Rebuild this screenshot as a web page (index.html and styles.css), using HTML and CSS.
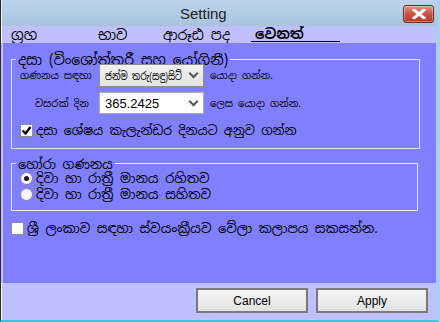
FILE: index.html
```html
<!DOCTYPE html>
<html lang="si">

<head>
	<meta charset='utf-8'>
	<title>Setting</title>
	<link rel="stylesheet" href="styles.css">
</head>

<body>
	<div id="window">
		<div class="titlebar">
			<span class="title">Setting</span>
			<button class="close">
				<svg width="14" height="10" viewBox="0 0 14 10">
					<path d="M2 1 L12 9 M12 1 L2 9" stroke="#ffffff" stroke-width="3" stroke-linecap="square" />
				</svg>
			</button>
		</div>
		<div class="tabs">
			<div class="tab">ග්‍රහ</div>
			<div class="tab">භාව</div>
			<div class="tab">ආරූඪ පද</div>
			<div class="tab active">වෙනත්</div>
		</div>
		<div id="panel">
			<div class="group g-dasa">
				<div class="caption">දසා (විංශෝත්තරී සහ යෝගිනී)</div>
				<div class="row r-first">
					<span class="label">ගණනය සඳහා</span>
					<div class="combo c-grey"><span class="sel">ජන්ම තරු(සඳු)සිට්</span><i class="arrow"></i></div>
					<span class="after">යොදා ගන්න.</span>
				</div>
				<div class="row r-second">
					<span class="label l-indent">වසරක් දින</span>
					<div class="combo c-white"><span class="num">365.2425</span><i class="arrow"></i></div>
					<span class="after">ලෙස යොදා ගන්න.</span>
				</div>
				<label class="check c-dasa">
					<span class="box">
						<svg width="11" height="11" viewBox="0 0 11 11">
							<path d="M1.5 5.5 L4.5 8.5 L9.5 2" stroke="#000" stroke-width="2.2" fill="none" />
						</svg>
					</span>
					දසා ශේෂය කැලැන්ඩර දිනයට අනුව ගන්න
				</label>
			</div>

			<div class="group g-hora">
				<div class="caption">හෝරා ගණනය</div>
				<label class="radio"><span class="dot on"></span>දිවා හා රාත්‍රී මානය රහිතව</label>
				<label class="radio"><span class="dot"></span>දිවා හා රාත්‍රී මානය සහිතව</label>
			</div>

			<label class="check c-free">
				<span class="box"></span>
				ශ්‍රී ලංකාව සඳහා ස්වයංක්‍රීයව වේලා කලාපය සකසන්න.
			</label>
		</div>
		<div class="footer">
			<button class="button">Cancel</button>
			<button class="button">Apply</button>
		</div>
	</div>
</body>

</html>
```

FILE: styles.css
```css
body {
	margin: 0;
	background: #ffffff;
	font-family: "Noto Sans Sinhala", "Noto Sans", "DejaVu Sans", sans-serif;
}

#window {
	width: 440px;
	height: 322px;
	box-sizing: border-box;
	display: flex;
	flex-direction: column;
	background: #c0c0ff;
	border-left: 1px solid #2a2a2a;
	border-right: 3px solid #9fd6ee;
	border-bottom: 2px solid #2ec8e6;
}

.titlebar {
	height: 26px;
	flex: none;
	position: relative;
	display: flex;
	align-items: center;
	padding-left: 178px;
	background: linear-gradient(#bdd4eb, #a9c3df);
	border-left: 1px solid #e4eef8;
}

.title {
	font-family: "Liberation Sans", Arial, sans-serif;
	font-size: 15px;
	color: #1e1e1e;
}

.close {
	position: absolute;
	right: 3px;
	top: 5px;
	width: 31px;
	height: 18px;
	padding: 0;
	display: flex;
	align-items: center;
	justify-content: center;
	border: 1px solid #6d2a24;
	border-radius: 3px;
	background: linear-gradient(#e3978c, #c9533f 50%, #b53a26);
	box-shadow: inset 0 0 0 1px rgba(255, 255, 255, 0.35);
}

.tabs {
	height: 17px;
	flex: none;
	display: grid;
	grid-template-columns: 87px 65px 92px 89px;
	padding-left: 5px;
	font-size: 14px;
	color: #000;
	border-left: 1px solid #ffffff;
}

.tab {
	padding-left: 4px;
	display: flex;
	align-items: center;
	overflow: hidden;
	white-space: nowrap;
}

.active {
	font-weight: bold;
	border-bottom: 1px solid #000;
	height: 15px;
}

#panel {
	height: 240px;
	flex: none;
	margin-left: 2px;
	margin-right: 1px;
	background: #8080ff;
	padding: 16px 15px 0 8px;
	box-sizing: border-box;
}

.group {
	padding: 0 0 0 8px;
	border: 1px solid #e8e8f4;
	color: #000;
	box-sizing: border-box;
}

.caption {
	width: fit-content;
	height: 16px;
	box-sizing: border-box;
	display: flex;
	align-items: center;
	padding: 4px 2px 0;
	margin: -10px 0 0 -4px;
	background: #8080ff;
	font-size: 14px;
	white-space: nowrap;
}

.g-dasa {
	height: 90px;
	width: 409px;
}

.g-hora {
	margin-top: 14px;
	width: 407px;
	height: 48px;
}

.g-hora .caption {
	font-size: 13px;
}

.row {
	display: flex;
	align-items: center;
	font-size: 10px;
	white-space: nowrap;
}

.r-first {
	height: 23px;
	margin-top: -2px;
}

.r-second {
	height: 22px;
	margin-top: 5px;
}

.label {
	width: 79px;
}

.l-indent {
	padding-left: 15px;
	box-sizing: border-box;
}

.after {
	margin-left: 6px;
}

.combo {
	width: 105px;
	height: 100%;
	box-sizing: border-box;
	display: flex;
	align-items: center;
	justify-content: space-between;
	padding: 0 4px 0 5px;
	border: 1px solid #abadb3;
	overflow: hidden;
}

.sel {
	font-size: 11.5px;
	white-space: nowrap;
	transform: scaleX(0.76);
	transform-origin: left center;
	width: 82px;
}

.c-grey {
	background: linear-gradient(#f2f2f2, #e4e4e4);
	border-color: #8e8f8f;
}

.c-white {
	background: #ffffff;
}

.num {
	font-family: "Liberation Sans", Arial, sans-serif;
	font-size: 13px;
}

.arrow {
	width: 5px;
	height: 5px;
	border-right: 2px solid #555;
	border-bottom: 2px solid #555;
	transform: rotate(45deg);
	margin: 0 2px 4px 0;
	flex: none;
}

.check {
	display: flex;
	align-items: center;
	gap: 3px;
	font-size: 12.5px;
	color: #000;
	height: 18px;
	white-space: nowrap;
}

.c-dasa {
	margin-top: 7px;
}

.c-free {
	margin-top: 8px;
	font-size: 13px;
}

.box {
	width: 13px;
	height: 13px;
	box-sizing: border-box;
	border: 1px solid #8e8f8f;
	background: #ffffff;
	display: flex;
	align-items: center;
	justify-content: center;
	flex: none;
}

.radio {
	display: flex;
	align-items: center;
	gap: 3px;
	font-size: 13px;
	height: 16px;
	white-space: nowrap;
}

.dot {
	width: 13px;
	height: 13px;
	box-sizing: border-box;
	border-radius: 50%;
	border: 1px solid #8e8f8f;
	background: radial-gradient(#ffffff, #e6e6e6);
	display: flex;
	align-items: center;
	justify-content: center;
	flex: none;
}

.dot.on::after {
	content: "";
	width: 5px;
	height: 5px;
	border-radius: 50%;
	background: #1b1b1b;
}

.footer {
	flex: 1;
	display: flex;
	justify-content: flex-end;
	align-items: center;
	gap: 8px;
	padding: 0 9px 2px 0;
	border-left: 1px solid #ffffff;
}

.button {
	width: 112px;
	height: 25px;
	border: 2px solid #7a7a7a;
	background: linear-gradient(#f4f4f4, #e2e2e2);
	font-family: "Liberation Sans", Arial, sans-serif;
	font-size: 12px;
	color: #000;
	padding: 0;
}
```
